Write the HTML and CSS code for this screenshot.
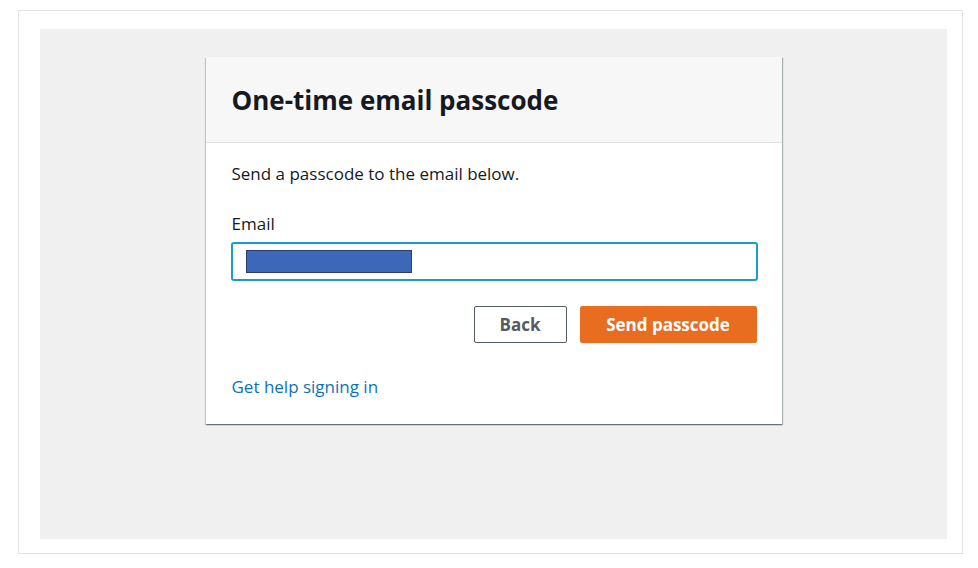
FILE: index.html
```html
<!DOCTYPE html>
<html>
<head>
<meta charset="utf-8">
<link rel="stylesheet" href="styles.css">
</head>
<body>
<div class="frame">
  <div class="stage">
    <div class="card">
      <div class="card-header">
        <h1 class="title">One-time email passcode</h1>
      </div>
      <div class="card-body">
        <p class="intro">Send a passcode to the email below.</p>
        <label class="label">Email</label>
        <div class="input">
          <span class="redact"></span>
        </div>
        <div class="actions">
          <button class="btn btn-normal">Back</button>
          <button class="btn btn-primary">Send passcode</button>
        </div>
        <a class="help" href="#">Get help signing in</a>
      </div>
    </div>
  </div>
</div>
</body>
</html>
```
FILE: styles.css
```css
* { box-sizing: border-box; }
html, body { margin: 0; padding: 0; background: #ffffff; }
body {
  font-family: "Open Sans", "Noto Sans", sans-serif;
  color: #16191f;
  padding: 10px 0 0 18px;
}
.frame {
  width: 945px;
  height: 544px;
  border: 1px solid #e3e3e3;
  padding: 18px 14px 14px 21px;
}
.stage {
  width: 907px;
  height: 510px;
  background: #eff0ef;
  display: flex;
  justify-content: center;
  align-items: flex-start;
  padding-top: 28px;
}
.card {
  width: 576px;
  background: #ffffff;
  box-shadow: 0 1px 1px 0 rgba(0, 28, 36, 0.35), 1px 1px 1px 0 rgba(0, 28, 36, 0.25), -1px 1px 1px 0 rgba(0, 28, 36, 0.15);
}
.card-header {
  height: 86px;
  background: #f7f7f7;
  border-bottom: 1px solid #e2e2e2;
  padding: 0 26px;
  display: flex;
  align-items: center;
}
.title {
  margin: 0;
  font-size: 26px;
  font-weight: 700;
  color: #16191f;
  letter-spacing: 0;
}
.card-body {
  padding: 20px 24px 26px 26px;
  display: flex;
  flex-direction: column;
}
.intro {
  margin: 0;
  font-size: 17px;
  line-height: 22px;
}
.label {
  margin-top: 28px;
  font-size: 17px;
  line-height: 22px;
}
.input {
  margin-top: 7px;
  margin-left: -1px;
  height: 39px;
  border: 2px solid #1a9cc7;
  border-radius: 3px;
  display: flex;
  align-items: center;
  padding-left: 13px;
}
.redact {
  width: 166px;
  height: 23px;
  background: #3d68b9;
  border: 1px solid #2b3f6a;
}
.actions {
  margin-top: 25px;
  display: flex;
  justify-content: flex-end;
  gap: 13px;
  padding-right: 1px;
}
.btn {
  font-family: inherit;
  font-size: 17px;
  font-weight: 700;
  height: 37px;
  border-radius: 2px;
  cursor: pointer;
  padding: 0;
}
.btn-normal {
  width: 93px;
  background: #ffffff;
  color: #545b64;
  border: 1px solid #545b64;
}
.btn-primary {
  width: 177px;
  background: #e96d21;
  color: #ffffff;
  border: 1px solid #e96d21;
}
.help {
  margin-top: 33px;
  font-size: 17px;
  line-height: 22px;
  color: #0a73bb;
  text-decoration: none;
  align-self: flex-start;
}
```
